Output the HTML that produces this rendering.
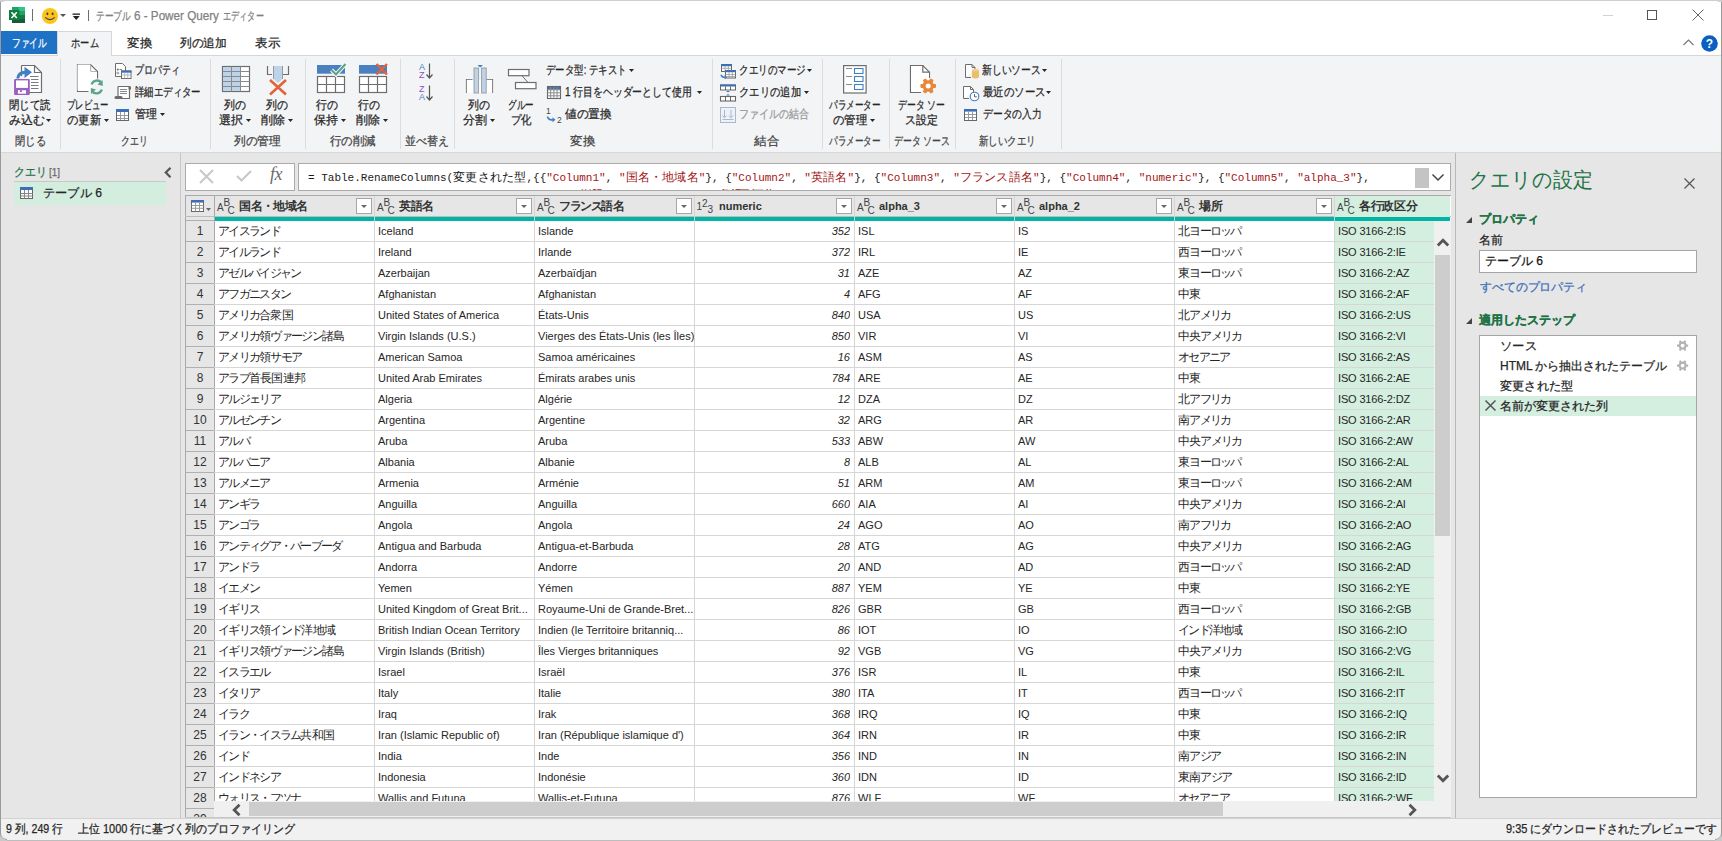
<!DOCTYPE html><html><head><meta charset="utf-8"><style>
*{margin:0;padding:0;box-sizing:border-box}
html,body{width:1722px;height:841px;overflow:hidden;background:#fff}
body{position:relative;font-family:"Liberation Sans",sans-serif;font-size:12px;color:#262626}
.t{position:absolute;white-space:nowrap;line-height:16px;height:16px;transform-origin:0 50%}
.g{color:#444}
.b{font-weight:bold}
.m{font-family:"Liberation Mono",monospace;font-size:11px}
svg{position:absolute;overflow:visible}
.c{position:absolute;white-space:nowrap;overflow:hidden;line-height:20px;height:20px;font-size:11px;color:#262626}
</style></head><body>
<div style="position:absolute;left:0px;top:0px;width:1722px;height:2px;background:#cfcfcf"></div>
<div style="position:absolute;left:0px;top:1px;width:1722px;height:30px;background:#fff;border-radius:6px 6px 0 0"></div>
<div style="position:absolute;left:0px;top:31px;width:1722px;height:25px;background:#fff"></div>
<div style="position:absolute;left:0px;top:55px;width:1722px;height:1px;background:#d6d6d6"></div>
<div style="position:absolute;left:0px;top:56px;width:1722px;height:96px;background:#f3f4f6"></div>
<div style="position:absolute;left:0px;top:152px;width:1722px;height:1px;background:#d8d8d8"></div>
<div style="position:absolute;left:0px;top:153px;width:1722px;height:665px;background:#e6e6e6"></div>
<div style="position:absolute;left:0px;top:818px;width:1722px;height:22px;background:#f1f1f1;border-top:1px solid #d2d2d2"></div>
<div style="position:absolute;left:0px;top:840px;width:1722px;height:1px;background:#bdbdbd"></div>
<div style="position:absolute;left:0px;top:2px;width:1px;height:838px;background:#9a9a9a"></div>
<div style="position:absolute;left:1721px;top:2px;width:1px;height:838px;background:#9a9a9a"></div>
<svg style="left:9px;top:7px" width="17" height="17" viewBox="0 0 17 17"><rect x="3" y="0" width="13" height="16" fill="#21a366"/>
<rect x="9.5" y="0" width="6.5" height="4" fill="#33c481"/>
<rect x="3" y="8" width="13" height="4" fill="#107c41"/>
<rect x="3" y="12" width="13" height="4" fill="#185c37"/>
<rect x="0" y="3" width="10.5" height="10" fill="#107c41"/>
<path d="M2.5 5.2 L7.8 11 M7.8 5.2 L2.5 11" stroke="#fff" stroke-width="1.6"/></svg>
<div style="position:absolute;left:32px;top:9px;width:1px;height:12px;background:#6e6e6e"></div>
<svg style="left:42px;top:8px" width="16" height="16" viewBox="0 0 16 16"><circle cx="8" cy="8" r="8" fill="#fcc419"/>
<ellipse cx="5.4" cy="5.8" rx="1" ry="1.4" fill="#3a3f5c"/>
<ellipse cx="10.6" cy="5.8" rx="1" ry="1.4" fill="#3a3f5c"/>
<path d="M3.2 9.3 Q8 13.8 12.8 9.3" stroke="#3a3f5c" stroke-width="1.1" fill="none"/></svg>
<svg style="left:60px;top:14px" width="6" height="4" viewBox="0 0 6 4"><path d="M0 0H6L3 3z" fill="#555"/></svg>
<svg style="left:72px;top:13px" width="9" height="8" viewBox="0 0 9 8"><rect x="0.5" y="0.5" width="7.5" height="1.3" fill="#222"/><path d="M0.8 3H7.7L4.25 7z" fill="#222"/></svg>
<div style="position:absolute;left:88px;top:10px;width:1px;height:11px;background:#6e6e6e"></div>
<div class="t " style="left:96px;top:8px;color:#808080;transform:scaleX(0.723);-webkit-text-stroke:0.25px currentColor;">テーブル</div>
<div class="t " style="left:134px;top:8px;color:#808080;font-size:13px;transform:scaleX(0.897);-webkit-text-stroke:0.25px currentColor;">6 - Power Query</div>
<div class="t " style="left:223px;top:8px;color:#808080;transform:scaleX(0.678);-webkit-text-stroke:0.25px currentColor;">エディター</div>
<div style="position:absolute;left:1603px;top:15px;width:10px;height:1px;background:#d0d0d0"></div>
<div style="position:absolute;left:1647px;top:10px;width:10px;height:10px;border:1px solid #555"></div>
<svg style="left:1692px;top:9px" width="12" height="12" viewBox="0 0 12 12"><path d="M0.5 0.5L11.5 11.5M11.5 0.5L0.5 11.5" stroke="#555" stroke-width="0.9"/></svg>
<div style="position:absolute;left:1px;top:31px;width:56px;height:23px;background:#1e72c6"></div>
<div class="t " style="left:12px;top:35px;color:#fff;transform:scaleX(0.723);-webkit-text-stroke:0.25px currentColor;">ファイル</div>
<div style="position:absolute;left:57px;top:31px;width:55px;height:25px;background:#f3f4f6;border:1px solid #d6d6d6;border-bottom:none"></div>
<div class="t " style="left:71px;top:35px;transform:scaleX(0.771);-webkit-text-stroke:0.25px currentColor;">ホーム</div>
<div class="t " style="left:127px;top:35px;transform:scaleX(1.043);-webkit-text-stroke:0.25px currentColor;">変換</div>
<div class="t " style="left:180px;top:35px;transform:scaleX(0.979);-webkit-text-stroke:0.25px currentColor;">列の追加</div>
<div class="t " style="left:255px;top:35px;transform:scaleX(1.043);-webkit-text-stroke:0.25px currentColor;">表示</div>
<svg style="left:1683px;top:39px" width="11" height="7" viewBox="0 0 11 7"><path d="M0.5 6L5.5 1L10.5 6" stroke="#777" stroke-width="1.2" fill="none"/></svg>
<svg style="left:1701px;top:35px" width="17" height="17" viewBox="0 0 17 17"><circle cx="8.5" cy="8.5" r="8.3" fill="#0a5fc0"/><text x="8.5" y="13" text-anchor="middle" font-family="Liberation Sans" font-weight="bold" font-size="12" fill="#fff">?</text></svg>
<div style="position:absolute;left:60px;top:59px;width:1px;height:90px;background:#dcdcdc"></div>
<div style="position:absolute;left:210px;top:59px;width:1px;height:90px;background:#dcdcdc"></div>
<div style="position:absolute;left:305px;top:59px;width:1px;height:90px;background:#dcdcdc"></div>
<div style="position:absolute;left:400px;top:59px;width:1px;height:90px;background:#dcdcdc"></div>
<div style="position:absolute;left:454px;top:59px;width:1px;height:90px;background:#dcdcdc"></div>
<div style="position:absolute;left:712px;top:59px;width:1px;height:90px;background:#dcdcdc"></div>
<div style="position:absolute;left:822px;top:59px;width:1px;height:90px;background:#dcdcdc"></div>
<div style="position:absolute;left:889px;top:59px;width:1px;height:90px;background:#dcdcdc"></div>
<div style="position:absolute;left:955px;top:59px;width:1px;height:90px;background:#dcdcdc"></div>
<div style="position:absolute;left:1061px;top:59px;width:1px;height:90px;background:#dcdcdc"></div>
<div class="t g" style="left:15px;top:133px;transform:scaleX(0.857);-webkit-text-stroke:0.25px currentColor;">閉じる</div>
<div class="t g" style="left:121px;top:133px;transform:scaleX(0.743);-webkit-text-stroke:0.25px currentColor;">クエリ</div>
<div class="t g" style="left:234px;top:133px;transform:scaleX(0.979);-webkit-text-stroke:0.25px currentColor;">列の管理</div>
<div class="t g" style="left:330px;top:133px;transform:scaleX(0.957);-webkit-text-stroke:0.25px currentColor;">行の削減</div>
<div class="t g" style="left:405px;top:133px;transform:scaleX(0.915);-webkit-text-stroke:0.25px currentColor;">並べ替え</div>
<div class="t g" style="left:570px;top:133px;transform:scaleX(1.043);-webkit-text-stroke:0.25px currentColor;">変換</div>
<div class="t g" style="left:754px;top:133px;transform:scaleX(1.043);-webkit-text-stroke:0.25px currentColor;">結合</div>
<div class="t g" style="left:829px;top:133px;transform:scaleX(0.718);-webkit-text-stroke:0.25px currentColor;">パラメーター</div>
<div class="t g" style="left:894px;top:133px;transform:scaleX(0.740);-webkit-text-stroke:0.25px currentColor;">データ ソース</div>
<div class="t g" style="left:979px;top:133px;transform:scaleX(0.789);-webkit-text-stroke:0.25px currentColor;">新しいクエリ</div>
<div class="t " style="left:9px;top:97px;transform:scaleX(0.872);-webkit-text-stroke:0.25px currentColor;">閉じて読</div>
<div class="t " style="left:9px;top:112px;transform:scaleX(1.000);-webkit-text-stroke:0.25px currentColor;">み込む</div>
<svg style="left:46px;top:119px" width="5" height="3" viewBox="0 0 5 3"><path d="M0 0H5L2.5 3z" fill="#262626"/></svg>
<div class="t " style="left:67px;top:97px;transform:scaleX(0.695);-webkit-text-stroke:0.25px currentColor;">プレビュー</div>
<div class="t " style="left:67px;top:112px;transform:scaleX(0.943);-webkit-text-stroke:0.25px currentColor;">の更新</div>
<svg style="left:104px;top:119px" width="5" height="3" viewBox="0 0 5 3"><path d="M0 0H5L2.5 3z" fill="#262626"/></svg>
<div class="t " style="left:224px;top:97px;transform:scaleX(0.913);-webkit-text-stroke:0.25px currentColor;">列の</div>
<div class="t " style="left:219px;top:112px;transform:scaleX(1.000);-webkit-text-stroke:0.25px currentColor;">選択</div>
<svg style="left:246px;top:119px" width="5" height="3" viewBox="0 0 5 3"><path d="M0 0H5L2.5 3z" fill="#262626"/></svg>
<div class="t " style="left:266px;top:97px;transform:scaleX(0.913);-webkit-text-stroke:0.25px currentColor;">列の</div>
<div class="t " style="left:261px;top:112px;transform:scaleX(1.000);-webkit-text-stroke:0.25px currentColor;">削除</div>
<svg style="left:288px;top:119px" width="5" height="3" viewBox="0 0 5 3"><path d="M0 0H5L2.5 3z" fill="#262626"/></svg>
<div class="t " style="left:316px;top:97px;transform:scaleX(0.913);-webkit-text-stroke:0.25px currentColor;">行の</div>
<div class="t " style="left:314px;top:112px;transform:scaleX(1.000);-webkit-text-stroke:0.25px currentColor;">保持</div>
<svg style="left:341px;top:119px" width="5" height="3" viewBox="0 0 5 3"><path d="M0 0H5L2.5 3z" fill="#262626"/></svg>
<div class="t " style="left:358px;top:97px;transform:scaleX(0.913);-webkit-text-stroke:0.25px currentColor;">行の</div>
<div class="t " style="left:356px;top:112px;transform:scaleX(1.000);-webkit-text-stroke:0.25px currentColor;">削除</div>
<svg style="left:383px;top:119px" width="5" height="3" viewBox="0 0 5 3"><path d="M0 0H5L2.5 3z" fill="#262626"/></svg>
<div class="t " style="left:468px;top:97px;transform:scaleX(0.913);-webkit-text-stroke:0.25px currentColor;">列の</div>
<div class="t " style="left:463px;top:112px;transform:scaleX(1.000);-webkit-text-stroke:0.25px currentColor;">分割</div>
<svg style="left:490px;top:119px" width="5" height="3" viewBox="0 0 5 3"><path d="M0 0H5L2.5 3z" fill="#262626"/></svg>
<div class="t " style="left:508px;top:97px;transform:scaleX(0.714);-webkit-text-stroke:0.25px currentColor;">グルー</div>
<div class="t " style="left:511px;top:112px;transform:scaleX(0.870);-webkit-text-stroke:0.25px currentColor;">プ化</div>
<div class="t " style="left:829px;top:97px;transform:scaleX(0.718);-webkit-text-stroke:0.25px currentColor;">パラメーター</div>
<div class="t " style="left:833px;top:112px;transform:scaleX(0.943);-webkit-text-stroke:0.25px currentColor;">の管理</div>
<svg style="left:870px;top:119px" width="5" height="3" viewBox="0 0 5 3"><path d="M0 0H5L2.5 3z" fill="#262626"/></svg>
<div class="t " style="left:898px;top:97px;transform:scaleX(0.738);-webkit-text-stroke:0.25px currentColor;">データ ソー</div>
<div class="t " style="left:905px;top:112px;transform:scaleX(0.914);-webkit-text-stroke:0.25px currentColor;">ス設定</div>
<div class="t " style="left:135px;top:62px;transform:scaleX(0.746);-webkit-text-stroke:0.25px currentColor;">プロパティ</div>
<div class="t " style="left:135px;top:84px;transform:scaleX(0.783);-webkit-text-stroke:0.25px currentColor;">詳細エディター</div>
<div class="t " style="left:135px;top:106px;transform:scaleX(0.913);-webkit-text-stroke:0.25px currentColor;">管理</div>
<svg style="left:160px;top:113px" width="5" height="3" viewBox="0 0 5 3"><path d="M0 0H5L2.5 3z" fill="#262626"/></svg>
<div class="t " style="left:546px;top:62px;transform:scaleX(0.787);-webkit-text-stroke:0.25px currentColor;">データ型: テキスト</div>
<svg style="left:629px;top:69px" width="5" height="3" viewBox="0 0 5 3"><path d="M0 0H5L2.5 3z" fill="#262626"/></svg>
<div class="t " style="left:565px;top:84px;transform:scaleX(0.823);-webkit-text-stroke:0.25px currentColor;">1 行目をヘッダーとして使用</div>
<svg style="left:697px;top:91px" width="5" height="3" viewBox="0 0 5 3"><path d="M0 0H5L2.5 3z" fill="#262626"/></svg>
<div class="t " style="left:565px;top:106px;transform:scaleX(0.979);-webkit-text-stroke:0.25px currentColor;">値の置換</div>
<div class="t " style="left:739px;top:62px;transform:scaleX(0.795);-webkit-text-stroke:0.25px currentColor;">クエリのマージ</div>
<svg style="left:807px;top:69px" width="5" height="3" viewBox="0 0 5 3"><path d="M0 0H5L2.5 3z" fill="#262626"/></svg>
<div class="t " style="left:739px;top:84px;transform:scaleX(0.859);-webkit-text-stroke:0.25px currentColor;">クエリの追加</div>
<svg style="left:804px;top:91px" width="5" height="3" viewBox="0 0 5 3"><path d="M0 0H5L2.5 3z" fill="#262626"/></svg>
<div class="t " style="left:739px;top:106px;color:#9a9a9a;transform:scaleX(0.831);-webkit-text-stroke:0.25px currentColor;">ファイルの結合</div>
<div class="t " style="left:982px;top:62px;transform:scaleX(0.817);-webkit-text-stroke:0.25px currentColor;">新しいソース</div>
<svg style="left:1042px;top:69px" width="5" height="3" viewBox="0 0 5 3"><path d="M0 0H5L2.5 3z" fill="#262626"/></svg>
<div class="t " style="left:983px;top:84px;transform:scaleX(0.873);-webkit-text-stroke:0.25px currentColor;">最近のソース</div>
<svg style="left:1046px;top:91px" width="5" height="3" viewBox="0 0 5 3"><path d="M0 0H5L2.5 3z" fill="#262626"/></svg>
<div class="t " style="left:983px;top:106px;transform:scaleX(0.817);-webkit-text-stroke:0.25px currentColor;">データの入力</div>
<svg style="left:13px;top:64px" width="30" height="32" viewBox="0 0 30 32"><path d="M8.5 1.5H21.5L28.5 8.5V28.5H16" fill="#fff" stroke="#6d6d6d" stroke-width="1.2"/>
<path d="M21.5 1.5V8.5H28.5" fill="none" stroke="#6d6d6d" stroke-width="1.2"/>
<path d="M8.5 1.5V12" stroke="#6d6d6d" stroke-width="1.2"/>
<path d="M17 12.5H25.5M18 15.5H25.5M18 18.5H25.5M18 21.5H25.5M18 24.5H25.5" stroke="#6d6d6d" stroke-width="0.9"/>
<path d="M4.8 14.5 Q5.2 8.5 12.5 8.2" stroke="#3f7fc2" stroke-width="3" fill="none"/>
<path d="M11.5 2.8L19 8.2L11.5 14z" fill="#3f7fc2"/>
<rect x="1.1" y="14.9" width="15.7" height="16" rx="1" fill="#9b5fc0"/>
<rect x="3" y="16.4" width="12" height="7.5" fill="#fff"/>
<rect x="4.9" y="26.2" width="8.1" height="3.5" fill="#fff"/>
<rect x="6.9" y="26.2" width="2" height="1.8" fill="#9b5fc0"/></svg>
<svg style="left:76px;top:63px" width="24" height="34" viewBox="0 0 24 34"><path d="M12.5 28.5H1.5V1.5H14.5L21.5 8.5V15.5" fill="#fff" stroke="#6d6d6d" stroke-width="1.2"/>
<path d="M14.5 1.5V8.5H21.5" fill="none" stroke="#6d6d6d" stroke-width="1.2"/>
<rect x="1.5" y="1.5" width="13" height="26" fill="#fff"/><path d="M2.1 8.5H20.9V15H12V27.9H2.1z" fill="#fff"/>
<path d="M15.6 21.5 A5.5 5.5 0 0 1 25.5 20" stroke="#5aa58a" stroke-width="2.4" fill="none"/>
<path d="M26.5 17L26.8 23L21.5 21.5z" fill="#5aa58a"/>
<path d="M25.8 26.5 A5.5 5.5 0 0 1 16 28" stroke="#5aa58a" stroke-width="2.4" fill="none"/>
<path d="M15 31L14.8 25L20 26.6z" fill="#5aa58a"/></svg>
<svg style="left:114px;top:62px" width="18" height="18" viewBox="0 0 18 18"><path d="M1.5 1.5H8.5L11.5 4.5V14.5H1.5z" fill="#fff" stroke="#6d6d6d" stroke-width="1"/>
<circle cx="3.8" cy="7.5" r="1" fill="#6d6d6d"/><circle cx="3.8" cy="11" r="1" fill="none" stroke="#6d6d6d" stroke-width="0.7"/>
<path d="M5.5 7.5H8" stroke="#6d6d6d" stroke-width="0.8"/>
<rect x="7.5" y="9" width="9.5" height="7.5" fill="#fff" stroke="#6d6d6d" stroke-width="1"/>
<rect x="7" y="8.5" width="10.5" height="2.2" fill="#3c6fb4"/>
<path d="M7.5 13H17M10.6 10.5V16.5M13.8 10.5V16.5" stroke="#aaa" stroke-width="0.8"/></svg>
<svg style="left:114px;top:85px" width="18" height="16" viewBox="0 0 18 16"><path d="M4 1.5H15.5V13.5H3.5" fill="#fff" stroke="#6d6d6d" stroke-width="1.2"/>
<path d="M4 1.5V11" stroke="#6d6d6d" stroke-width="1.2"/>
<rect x="14.5" y="1.5" width="2.5" height="3" fill="#6d6d6d"/>
<rect x="0.5" y="11" width="8" height="3" rx="1.5" fill="#6d6d6d"/>
<path d="M6 4.5H13M6 6.5H13M6 8.5H13" stroke="#8a8a8a" stroke-width="1"/></svg>
<svg style="left:116px;top:109px" width="13" height="12" viewBox="0 0 13 12"><rect x="0.5" y="0.5" width="12" height="11" fill="#fff" stroke="#666" stroke-width="1"/><rect x="0" y="0" width="13" height="3" fill="#3c6fb4"/><path d="M4.5 3V11M8.5 3V11M1 6.5H12M1 9.5H12" stroke="#9a9a9a" stroke-width="1"/></svg>
<svg style="left:222px;top:66px" width="28" height="26" viewBox="0 0 28 26"><rect x="0.5" y="0.5" width="27" height="25" fill="#fff" stroke="#6d6d6d" stroke-width="1.2"/>
<rect x="1" y="1" width="17.5" height="24" fill="#bcd3ea"/>
<path d="M9.5 0.5V25.5M18.5 0.5V25.5M0.5 5.5H27.5M0.5 10.5H27.5M0.5 15.5H27.5M0.5 20.5H27.5" stroke="#8a8a8a" stroke-width="1"/></svg>
<svg style="left:266px;top:65px" width="24" height="31" viewBox="0 0 24 31"><path d="M1.5 1V9.5H6M17 9.5H22.5V1" stroke="#6d6d6d" stroke-width="1.2" fill="none"/>
<path d="M7.5 1H16.5V14L12 18L7.5 14z" fill="#bcd3ea"/>
<path d="M7.5 1V14M16.5 1V14" stroke="#9a9a9a" stroke-width="1"/>
<path d="M4 15L20 29.5M20 15L4 29.5" stroke="#e0633a" stroke-width="2.6"/></svg>
<svg style="left:316px;top:62px" width="31" height="32" viewBox="0 0 31 32"><rect x="1" y="3" width="28" height="8.7" fill="#4a80bf"/>
<rect x="1.5" y="14.5" width="27" height="16" fill="#fff" stroke="#6d6d6d" stroke-width="1.2"/>
<path d="M10.5 14.5V30.5M19.5 14.5V30.5M1.5 22.5H28.5" stroke="#6d6d6d" stroke-width="1.2"/>
<path d="M15.5 8L20 12.5L29.5 2" stroke="#fff" stroke-width="4" fill="none"/>
<path d="M15.5 8L20 12.5L29.5 2" stroke="#5aa58a" stroke-width="2.2" fill="none"/></svg>
<svg style="left:358px;top:62px" width="31" height="32" viewBox="0 0 31 32"><rect x="1" y="3" width="28" height="8.7" fill="#4a80bf"/>
<rect x="1.5" y="14.5" width="27" height="16" fill="#fff" stroke="#6d6d6d" stroke-width="1.2"/>
<path d="M10.5 14.5V30.5M19.5 14.5V30.5M1.5 22.5H28.5" stroke="#6d6d6d" stroke-width="1.2"/>
<path d="M18.5 2L29 12.5M29 2L18.5 12.5" stroke="#e0633a" stroke-width="2.4"/></svg>
<svg style="left:419px;top:63px" width="16" height="17" viewBox="0 0 16 17"><text x="0" y="7" font-family="Liberation Sans" font-size="9" fill="#3f7fc2">A</text>
<text x="0" y="15" font-family="Liberation Sans" font-size="9" fill="#8e4fbf">Z</text>
<path d="M10.5 0.5V14.5M7.5 11.5L10.5 15L13.5 11.5" stroke="#555" stroke-width="1.2" fill="none"/></svg>
<svg style="left:419px;top:85px" width="16" height="17" viewBox="0 0 16 17"><text x="0" y="7" font-family="Liberation Sans" font-size="9" fill="#8e4fbf">Z</text>
<text x="0" y="15" font-family="Liberation Sans" font-size="9" fill="#3f7fc2">A</text>
<path d="M10.5 0.5V14.5M7.5 11.5L10.5 15L13.5 11.5" stroke="#555" stroke-width="1.2" fill="none"/></svg>
<svg style="left:465px;top:64px" width="30" height="30" viewBox="0 0 30 30"><path d="M1.5 29V15.5H7.5M20.5 15.5H27.5V29" stroke="#6d6d6d" stroke-width="1.2" fill="none"/>
<rect x="1.8" y="15.8" width="25.4" height="13" fill="#fff"/>
<rect x="9" y="4" width="4.6" height="25" fill="#bcd3ea" stroke="#9a9a9a" stroke-width="0.9"/>
<rect x="16.6" y="4" width="4.6" height="25" fill="#bcd3ea" stroke="#9a9a9a" stroke-width="0.9"/>
<path d="M12.5 1H18L15.2 3.6z" fill="#3f7fc2"/></svg>
<svg style="left:507px;top:68px" width="30" height="22" viewBox="0 0 30 22"><rect x="1.5" y="1.5" width="20.5" height="6.2" fill="#fff" stroke="#6d6d6d" stroke-width="1.2"/>
<rect x="8.5" y="14.5" width="20.5" height="6.2" fill="#fff" stroke="#6d6d6d" stroke-width="1.2"/>
<path d="M15 7.7L21 14.5" stroke="#6d6d6d" stroke-width="1"/></svg>
<svg style="left:547px;top:86px" width="14" height="13" viewBox="0 0 14 13"><rect x="0.5" y="0.5" width="13" height="12" fill="#fff" stroke="#666" stroke-width="1.1"/>
<rect x="1" y="1" width="12" height="2.6" fill="#3c6fb4"/>
<path d="M3.7 1V12.5M6.9 1V12.5M10.1 1V12.5M0.5 3.8H13.5M0.5 6.8H13.5M0.5 9.8H13.5" stroke="#8a8a8a" stroke-width="1"/></svg>
<svg style="left:545px;top:106px" width="18" height="18" viewBox="0 0 18 18"><text x="1" y="8" font-family="Liberation Sans" font-size="8.5" fill="#444">1</text>
<text x="12" y="17" font-family="Liberation Sans" font-size="8.5" fill="#444">2</text>
<path d="M2.5 10.5 Q3.5 14.5 8 13.8" stroke="#3f7fc2" stroke-width="1.6" fill="none"/>
<path d="M7.5 11.2L10.5 13.8L7.5 16.2z" fill="#3f7fc2"/></svg>
<svg style="left:720px;top:63px" width="16" height="16" viewBox="0 0 16 16"><rect x="1.5" y="1.5" width="10" height="7" fill="#fff" stroke="#666" stroke-width="1"/>
<rect x="1" y="1" width="11" height="2.2" fill="#3c6fb4"/>
<path d="M1.5 5.3H11.5M5 3V8.5M8.3 3V8.5" stroke="#999" stroke-width="0.8"/>
<rect x="5.5" y="7.5" width="10" height="7.5" fill="#fff" stroke="#666" stroke-width="1"/>
<rect x="5" y="7" width="11" height="2.2" fill="#3c6fb4"/>
<path d="M5.5 11.5H15.5M5.5 13.5H15.5M9 9V15M12.3 9V15" stroke="#999" stroke-width="0.8"/>
<path d="M1 11.8 Q1.8 14.6 5 14.3" stroke="#3f7fc2" stroke-width="1.5" fill="none"/>
<path d="M4.6 12L7 14.3L4.6 16.4z" fill="#3f7fc2"/></svg>
<svg style="left:720px;top:84px" width="16" height="18" viewBox="0 0 16 18"><rect x="0.5" y="1" width="15" height="5" fill="#fff" stroke="#666" stroke-width="1"/>
<rect x="0" y="0.5" width="16" height="2" fill="#3c6fb4"/>
<path d="M5.5 2.5V6M10.5 2.5V6" stroke="#666" stroke-width="1"/>
<rect x="0.5" y="12.5" width="15" height="4.5" fill="#fff" stroke="#666" stroke-width="1.1"/>
<path d="M5.5 12.5V17M10.5 12.5V17" stroke="#666" stroke-width="1"/>
<path d="M6 7L8 8.6L10 7z M6 11.5L8 9.9L10 11.5z" fill="#3f7fc2"/></svg>
<svg style="left:720px;top:107px" width="16" height="16" viewBox="0 0 16 16"><rect x="0.5" y="0.5" width="15" height="15" fill="#eef2f8" stroke="#a9b8cc" stroke-width="1"/>
<path d="M4.5 3V10.5M2.5 8.5L4.5 10.8L6.5 8.5M11 3V10.5M9 8.5L11 10.8L13 8.5M2.5 12.5H13.5" stroke="#a9b8cc" stroke-width="1" fill="none"/></svg>
<svg style="left:843px;top:65px" width="24" height="28" viewBox="0 0 24 28"><rect x="0.6" y="0.6" width="22.5" height="27.4" fill="#fff" stroke="#6d6d6d" stroke-width="1.2"/>
<path d="M3 3.5H9M3 11.5H9M3 19.5H9" stroke="#8a8a8a" stroke-width="1"/>
<rect x="11.5" y="3.5" width="8.5" height="5" fill="none" stroke="#3f7fc2" stroke-width="1.1"/>
<rect x="11.5" y="11.5" width="8.5" height="5" fill="none" stroke="#3f7fc2" stroke-width="1.1"/>
<rect x="11.5" y="19.5" width="8.5" height="5" fill="none" stroke="#3f7fc2" stroke-width="1.1"/></svg>
<svg style="left:909px;top:64px" width="30" height="32" viewBox="0 0 30 32"><path d="M12 28.5H1.5V1.5H13.8L20.5 8.2V14" fill="#fff" stroke="#6d6d6d" stroke-width="1.2"/>
<path d="M2.1 2.1H13.5V8.5H19.9V14H12V27.9H2.1z" fill="#fff"/>
<path d="M13.8 1.5V8.2H20.5" fill="none" stroke="#6d6d6d" stroke-width="1.2"/>
<g transform="translate(19.2 22)" fill="#e8873a">
<circle r="5.8"/>
<rect x="-7.8" y="-1.9" width="15.6" height="3.8" rx="0.8"/>
<rect x="-7.8" y="-1.9" width="15.6" height="3.8" rx="0.8" transform="rotate(60)"/>
<rect x="-7.8" y="-1.9" width="15.6" height="3.8" rx="0.8" transform="rotate(-60)"/>
<circle r="2.5" fill="#fff"/></g></svg>
<svg style="left:964px;top:63px" width="16" height="17" viewBox="0 0 16 17"><path d="M1.5 14.5V1.5H8L11 4.5V6" fill="#fff" stroke="#6d6d6d" stroke-width="1"/>
<path d="M1.5 14.5H7" stroke="#6d6d6d" stroke-width="1"/>
<path d="M8 1.5V4.5H11" fill="none" stroke="#6d6d6d" stroke-width="1"/>
<path d="M8 7V14.5Q11.5 16.5 15 14.5V7z" fill="#e8c06b"/>
<ellipse cx="11.5" cy="7" rx="3.5" ry="1.3" fill="#f0d28e"/></svg>
<svg style="left:962px;top:85px" width="18" height="18" viewBox="0 0 18 18"><path d="M1.5 13.5V1.5H8.5L11.5 4.5V7" fill="#fff" stroke="#6d6d6d" stroke-width="1"/>
<path d="M1.5 13.5H7" stroke="#6d6d6d" stroke-width="1"/>
<path d="M8.5 1.5V4.5H11.5" fill="none" stroke="#6d6d6d" stroke-width="1"/>
<circle cx="12.5" cy="11.5" r="4.3" fill="#fff" stroke="#3f7fc2" stroke-width="1.1"/>
<path d="M12.5 9V11.8H14.8" stroke="#555" stroke-width="0.9" fill="none"/></svg>
<svg style="left:964px;top:109px" width="13" height="12" viewBox="0 0 13 12"><rect x="0.5" y="0.5" width="12" height="11" fill="#fff" stroke="#666" stroke-width="1"/><rect x="0" y="0" width="13" height="2.6" fill="#3c6fb4"/><path d="M4.5 2.6V11M8.5 2.6V11M1 5.5H12M1 8.5H12" stroke="#9a9a9a" stroke-width="1"/></svg>
<div class="t " style="left:14px;top:164px;color:#217346;transform:scaleX(0.914);-webkit-text-stroke:0.25px currentColor;">クエリ</div>
<div class="t " style="left:49px;top:165px;color:#6a6a6a;font-size:10px;transform:scaleX(0.988);-webkit-text-stroke:0.25px currentColor;">[1]</div>
<svg style="left:164px;top:167px" width="8" height="11" viewBox="0 0 8 11"><path d="M6.5 0.8L1.8 5.5L6.5 10.2" stroke="#555" stroke-width="2.2" fill="none"/></svg>
<div style="position:absolute;left:14px;top:181px;width:152px;height:1px;background:#c8c8c8"></div>
<div style="position:absolute;left:14px;top:182px;width:152px;height:23px;background:#d3eedf"></div>
<svg style="left:20px;top:187px" width="13" height="12" viewBox="0 0 13 12"><rect x="0.5" y="0.5" width="12" height="11" fill="#fff" stroke="#666"/><rect x="0" y="0" width="13" height="3" fill="#3c6fb4"/><path d="M0.5 6.5H12.5M0.5 9H12.5M4.5 3V11.5M8.5 3V11.5" stroke="#888" stroke-width="1"/></svg>
<div class="t " style="left:43px;top:185px;transform:scaleX(1.017);-webkit-text-stroke:0.25px currentColor;">テーブル 6</div>
<div style="position:absolute;left:180px;top:153px;width:1px;height:665px;background:#c6c6c6"></div>
<div style="position:absolute;left:185px;top:163px;width:110px;height:28px;background:#fff;border:1px solid #ababab"></div>
<div style="position:absolute;left:298px;top:163px;width:1153px;height:28px;background:#fff;border:1px solid #ababab"></div>
<div style="position:absolute;left:185px;top:195px;width:1266px;height:623px;background:#fff"></div>
<div style="position:absolute;left:185px;top:195px;width:1266px;height:1px;background:#a9a9a9"></div>
<div style="position:absolute;left:185px;top:195px;width:1px;height:623px;background:#a9a9a9"></div>
<div style="position:absolute;left:186px;top:196px;width:1264px;height:20px;background:#e6e6e6"></div>
<div style="position:absolute;left:186px;top:216px;width:28px;height:602px;background:#e6e6e6"></div>
<div style="position:absolute;left:185px;top:216px;width:1266px;height:1px;background:#bdbdbd"></div>
<div style="position:absolute;left:214px;top:217px;width:1220px;height:4px;background:#00b4a6"></div>
<div style="position:absolute;left:1334px;top:196px;width:116px;height:21px;background:#d4eedf"></div>
<div style="position:absolute;left:1434px;top:217px;width:16px;height:4px;background:#00b4a6"></div>
<div style="position:absolute;left:186px;top:220px;width:28px;height:1px;background:#b0b0b0"></div>
<div style="position:absolute;left:214px;top:196px;width:1px;height:622px;background:#a9a9a9"></div>
<div style="position:absolute;left:1335px;top:221px;width:99px;height:580px;background:#d4eedf"></div>
<div style="position:absolute;left:374px;top:196px;width:1px;height:605px;background:#d6d6d6"></div>
<div style="position:absolute;left:534px;top:196px;width:1px;height:605px;background:#d6d6d6"></div>
<div style="position:absolute;left:694px;top:196px;width:1px;height:605px;background:#d6d6d6"></div>
<div style="position:absolute;left:854px;top:196px;width:1px;height:605px;background:#d6d6d6"></div>
<div style="position:absolute;left:1014px;top:196px;width:1px;height:605px;background:#d6d6d6"></div>
<div style="position:absolute;left:1174px;top:196px;width:1px;height:605px;background:#d6d6d6"></div>
<div style="position:absolute;left:1334px;top:196px;width:1px;height:605px;background:#d6d6d6"></div>
<svg style="left:191px;top:200px" width="20" height="12" viewBox="0 0 20 12"><rect x="0.5" y="0.5" width="12" height="11" fill="#fff" stroke="#666"/><rect x="0" y="0" width="13" height="2.6" fill="#3c6fb4"/><path d="M0.5 5.5H12.5M0.5 8.3H12.5M4.5 2.6V11.5M8.5 2.6V11.5" stroke="#999" stroke-width="1"/><path d="M15 8H20L17.5 11z" fill="#666"/></svg>
<svg style="left:217px;top:198px" width="20" height="16" viewBox="0 0 20 16"><text x="0" y="13" font-family="Liberation Sans" font-size="10" fill="#444">A</text><text x="6.5" y="8" font-family="Liberation Sans" font-size="10" fill="#444">B</text><text x="10.5" y="15.5" font-family="Liberation Sans" font-size="10" fill="#444">C</text></svg>
<div class="t b" style="left:239px;top:198px;font-size:11px;color:#333"><span style="font-size:12px;letter-spacing:-0.3px">国名</span><span style="font-size:12px;letter-spacing:-1.5px">・</span><span style="font-size:12px;letter-spacing:-0.3px">地域名</span></div>
<div style="position:absolute;left:356px;top:198px;width:16px;height:16px;background:#fff;border:1px solid #a6a6a6"></div>
<svg style="left:361px;top:205px" width="6" height="3" viewBox="0 0 6 3"><path d="M0 0H6L3 3z" fill="#666"/></svg>
<svg style="left:377px;top:198px" width="20" height="16" viewBox="0 0 20 16"><text x="0" y="13" font-family="Liberation Sans" font-size="10" fill="#444">A</text><text x="6.5" y="8" font-family="Liberation Sans" font-size="10" fill="#444">B</text><text x="10.5" y="15.5" font-family="Liberation Sans" font-size="10" fill="#444">C</text></svg>
<div class="t b" style="left:399px;top:198px;font-size:11px;color:#333"><span style="font-size:12px;letter-spacing:-0.3px">英語名</span></div>
<div style="position:absolute;left:516px;top:198px;width:16px;height:16px;background:#fff;border:1px solid #a6a6a6"></div>
<svg style="left:521px;top:205px" width="6" height="3" viewBox="0 0 6 3"><path d="M0 0H6L3 3z" fill="#666"/></svg>
<svg style="left:537px;top:198px" width="20" height="16" viewBox="0 0 20 16"><text x="0" y="13" font-family="Liberation Sans" font-size="10" fill="#444">A</text><text x="6.5" y="8" font-family="Liberation Sans" font-size="10" fill="#444">B</text><text x="10.5" y="15.5" font-family="Liberation Sans" font-size="10" fill="#444">C</text></svg>
<div class="t b" style="left:559px;top:198px;font-size:11px;color:#333"><span style="font-size:12px;letter-spacing:-1.5px">フランス</span><span style="font-size:12px;letter-spacing:-0.3px">語名</span></div>
<div style="position:absolute;left:676px;top:198px;width:16px;height:16px;background:#fff;border:1px solid #a6a6a6"></div>
<svg style="left:681px;top:205px" width="6" height="3" viewBox="0 0 6 3"><path d="M0 0H6L3 3z" fill="#666"/></svg>
<svg style="left:697px;top:198px" width="20" height="16" viewBox="0 0 20 16"><text x="-0.5" y="12" font-family="Liberation Sans" font-size="10" fill="#444">1</text><text x="5" y="9" font-family="Liberation Sans" font-size="10" fill="#444">2</text><text x="10.5" y="15" font-family="Liberation Sans" font-size="10" fill="#444">3</text></svg>
<div class="t b" style="left:719px;top:198px;font-size:11px;color:#333">numeric</div>
<div style="position:absolute;left:836px;top:198px;width:16px;height:16px;background:#fff;border:1px solid #a6a6a6"></div>
<svg style="left:841px;top:205px" width="6" height="3" viewBox="0 0 6 3"><path d="M0 0H6L3 3z" fill="#666"/></svg>
<svg style="left:857px;top:198px" width="20" height="16" viewBox="0 0 20 16"><text x="0" y="13" font-family="Liberation Sans" font-size="10" fill="#444">A</text><text x="6.5" y="8" font-family="Liberation Sans" font-size="10" fill="#444">B</text><text x="10.5" y="15.5" font-family="Liberation Sans" font-size="10" fill="#444">C</text></svg>
<div class="t b" style="left:879px;top:198px;font-size:11px;color:#333">alpha_3</div>
<div style="position:absolute;left:996px;top:198px;width:16px;height:16px;background:#fff;border:1px solid #a6a6a6"></div>
<svg style="left:1001px;top:205px" width="6" height="3" viewBox="0 0 6 3"><path d="M0 0H6L3 3z" fill="#666"/></svg>
<svg style="left:1017px;top:198px" width="20" height="16" viewBox="0 0 20 16"><text x="0" y="13" font-family="Liberation Sans" font-size="10" fill="#444">A</text><text x="6.5" y="8" font-family="Liberation Sans" font-size="10" fill="#444">B</text><text x="10.5" y="15.5" font-family="Liberation Sans" font-size="10" fill="#444">C</text></svg>
<div class="t b" style="left:1039px;top:198px;font-size:11px;color:#333">alpha_2</div>
<div style="position:absolute;left:1156px;top:198px;width:16px;height:16px;background:#fff;border:1px solid #a6a6a6"></div>
<svg style="left:1161px;top:205px" width="6" height="3" viewBox="0 0 6 3"><path d="M0 0H6L3 3z" fill="#666"/></svg>
<svg style="left:1177px;top:198px" width="20" height="16" viewBox="0 0 20 16"><text x="0" y="13" font-family="Liberation Sans" font-size="10" fill="#444">A</text><text x="6.5" y="8" font-family="Liberation Sans" font-size="10" fill="#444">B</text><text x="10.5" y="15.5" font-family="Liberation Sans" font-size="10" fill="#444">C</text></svg>
<div class="t b" style="left:1199px;top:198px;font-size:11px;color:#333"><span style="font-size:12px;letter-spacing:-0.3px">場所</span></div>
<div style="position:absolute;left:1316px;top:198px;width:16px;height:16px;background:#fff;border:1px solid #a6a6a6"></div>
<svg style="left:1321px;top:205px" width="6" height="3" viewBox="0 0 6 3"><path d="M0 0H6L3 3z" fill="#666"/></svg>
<svg style="left:1337px;top:198px" width="20" height="16" viewBox="0 0 20 16"><text x="0" y="13" font-family="Liberation Sans" font-size="10" fill="#444">A</text><text x="6.5" y="8" font-family="Liberation Sans" font-size="10" fill="#444">B</text><text x="10.5" y="15.5" font-family="Liberation Sans" font-size="10" fill="#444">C</text></svg>
<div class="t b" style="left:1359px;top:198px;font-size:11px;color:#333"><span style="font-size:12px;letter-spacing:-0.3px">各行政区分</span></div>
<div style="position:absolute;left:214px;top:241px;width:1220px;height:1px;background:#d6d6d6"></div>
<div style="position:absolute;left:186px;top:241px;width:28px;height:1px;background:#b0b0b0"></div>
<div class="c" style="left:186px;top:221px;width:28px;text-align:center;color:#333;font-size:12px">1</div>
<div class="c" style="left:218px;top:221px;width:156px;height:20px;"><span style="font-size:12px;letter-spacing:-1.7px">アイスランド</span></div>
<div class="c" style="left:378px;top:221px;width:156px;height:20px;">Iceland</div>
<div class="c" style="left:538px;top:221px;width:156px;height:20px;">Islande</div>
<div class="c" style="left:695px;top:221px;width:155px;text-align:right;font-style:italic;height:20px">352</div>
<div class="c" style="left:858px;top:221px;width:156px;height:20px;">ISL</div>
<div class="c" style="left:1018px;top:221px;width:156px;height:20px;">IS</div>
<div class="c" style="left:1178px;top:221px;width:156px;height:20px;"><span style="font-size:12px;letter-spacing:-0.8px">北</span><span style="font-size:12px;letter-spacing:-1.7px">ヨーロッパ</span></div>
<div class="c" style="left:1338px;top:221px;width:156px;height:20px;letter-spacing:-0.15px;">ISO 3166-2:IS</div>
<div style="position:absolute;left:214px;top:262px;width:1220px;height:1px;background:#d6d6d6"></div>
<div style="position:absolute;left:186px;top:262px;width:28px;height:1px;background:#b0b0b0"></div>
<div class="c" style="left:186px;top:242px;width:28px;text-align:center;color:#333;font-size:12px">2</div>
<div class="c" style="left:218px;top:242px;width:156px;height:20px;"><span style="font-size:12px;letter-spacing:-1.7px">アイルランド</span></div>
<div class="c" style="left:378px;top:242px;width:156px;height:20px;">Ireland</div>
<div class="c" style="left:538px;top:242px;width:156px;height:20px;">Irlande</div>
<div class="c" style="left:695px;top:242px;width:155px;text-align:right;font-style:italic;height:20px">372</div>
<div class="c" style="left:858px;top:242px;width:156px;height:20px;">IRL</div>
<div class="c" style="left:1018px;top:242px;width:156px;height:20px;">IE</div>
<div class="c" style="left:1178px;top:242px;width:156px;height:20px;"><span style="font-size:12px;letter-spacing:-0.8px">西</span><span style="font-size:12px;letter-spacing:-1.7px">ヨーロッパ</span></div>
<div class="c" style="left:1338px;top:242px;width:156px;height:20px;letter-spacing:-0.15px;">ISO 3166-2:IE</div>
<div style="position:absolute;left:214px;top:283px;width:1220px;height:1px;background:#d6d6d6"></div>
<div style="position:absolute;left:186px;top:283px;width:28px;height:1px;background:#b0b0b0"></div>
<div class="c" style="left:186px;top:263px;width:28px;text-align:center;color:#333;font-size:12px">3</div>
<div class="c" style="left:218px;top:263px;width:156px;height:20px;"><span style="font-size:12px;letter-spacing:-1.7px">アゼルバイジャン</span></div>
<div class="c" style="left:378px;top:263px;width:156px;height:20px;">Azerbaijan</div>
<div class="c" style="left:538px;top:263px;width:156px;height:20px;">Azerbaïdjan</div>
<div class="c" style="left:695px;top:263px;width:155px;text-align:right;font-style:italic;height:20px">31</div>
<div class="c" style="left:858px;top:263px;width:156px;height:20px;">AZE</div>
<div class="c" style="left:1018px;top:263px;width:156px;height:20px;">AZ</div>
<div class="c" style="left:1178px;top:263px;width:156px;height:20px;"><span style="font-size:12px;letter-spacing:-0.8px">東</span><span style="font-size:12px;letter-spacing:-1.7px">ヨーロッパ</span></div>
<div class="c" style="left:1338px;top:263px;width:156px;height:20px;letter-spacing:-0.15px;">ISO 3166-2:AZ</div>
<div style="position:absolute;left:214px;top:304px;width:1220px;height:1px;background:#d6d6d6"></div>
<div style="position:absolute;left:186px;top:304px;width:28px;height:1px;background:#b0b0b0"></div>
<div class="c" style="left:186px;top:284px;width:28px;text-align:center;color:#333;font-size:12px">4</div>
<div class="c" style="left:218px;top:284px;width:156px;height:20px;"><span style="font-size:12px;letter-spacing:-1.7px">アフガニスタン</span></div>
<div class="c" style="left:378px;top:284px;width:156px;height:20px;">Afghanistan</div>
<div class="c" style="left:538px;top:284px;width:156px;height:20px;">Afghanistan</div>
<div class="c" style="left:695px;top:284px;width:155px;text-align:right;font-style:italic;height:20px">4</div>
<div class="c" style="left:858px;top:284px;width:156px;height:20px;">AFG</div>
<div class="c" style="left:1018px;top:284px;width:156px;height:20px;">AF</div>
<div class="c" style="left:1178px;top:284px;width:156px;height:20px;"><span style="font-size:12px;letter-spacing:-0.8px">中東</span></div>
<div class="c" style="left:1338px;top:284px;width:156px;height:20px;letter-spacing:-0.15px;">ISO 3166-2:AF</div>
<div style="position:absolute;left:214px;top:325px;width:1220px;height:1px;background:#d6d6d6"></div>
<div style="position:absolute;left:186px;top:325px;width:28px;height:1px;background:#b0b0b0"></div>
<div class="c" style="left:186px;top:305px;width:28px;text-align:center;color:#333;font-size:12px">5</div>
<div class="c" style="left:218px;top:305px;width:156px;height:20px;"><span style="font-size:12px;letter-spacing:-1.7px">アメリカ</span><span style="font-size:12px;letter-spacing:-0.8px">合衆国</span></div>
<div class="c" style="left:378px;top:305px;width:156px;height:20px;">United States of America</div>
<div class="c" style="left:538px;top:305px;width:156px;height:20px;">États-Unis</div>
<div class="c" style="left:695px;top:305px;width:155px;text-align:right;font-style:italic;height:20px">840</div>
<div class="c" style="left:858px;top:305px;width:156px;height:20px;">USA</div>
<div class="c" style="left:1018px;top:305px;width:156px;height:20px;">US</div>
<div class="c" style="left:1178px;top:305px;width:156px;height:20px;"><span style="font-size:12px;letter-spacing:-0.8px">北</span><span style="font-size:12px;letter-spacing:-1.7px">アメリカ</span></div>
<div class="c" style="left:1338px;top:305px;width:156px;height:20px;letter-spacing:-0.15px;">ISO 3166-2:US</div>
<div style="position:absolute;left:214px;top:346px;width:1220px;height:1px;background:#d6d6d6"></div>
<div style="position:absolute;left:186px;top:346px;width:28px;height:1px;background:#b0b0b0"></div>
<div class="c" style="left:186px;top:326px;width:28px;text-align:center;color:#333;font-size:12px">6</div>
<div class="c" style="left:218px;top:326px;width:156px;height:20px;"><span style="font-size:12px;letter-spacing:-1.7px">アメリカ</span><span style="font-size:12px;letter-spacing:-0.8px">領</span><span style="font-size:12px;letter-spacing:-1.7px">ヴァージン</span><span style="font-size:12px;letter-spacing:-0.8px">諸島</span></div>
<div class="c" style="left:378px;top:326px;width:156px;height:20px;">Virgin Islands (U.S.)</div>
<div class="c" style="left:538px;top:326px;width:156px;height:20px;">Vierges des États-Unis (les Îles)</div>
<div class="c" style="left:695px;top:326px;width:155px;text-align:right;font-style:italic;height:20px">850</div>
<div class="c" style="left:858px;top:326px;width:156px;height:20px;">VIR</div>
<div class="c" style="left:1018px;top:326px;width:156px;height:20px;">VI</div>
<div class="c" style="left:1178px;top:326px;width:156px;height:20px;"><span style="font-size:12px;letter-spacing:-0.8px">中央</span><span style="font-size:12px;letter-spacing:-1.7px">アメリカ</span></div>
<div class="c" style="left:1338px;top:326px;width:156px;height:20px;letter-spacing:-0.15px;">ISO 3166-2:VI</div>
<div style="position:absolute;left:214px;top:367px;width:1220px;height:1px;background:#d6d6d6"></div>
<div style="position:absolute;left:186px;top:367px;width:28px;height:1px;background:#b0b0b0"></div>
<div class="c" style="left:186px;top:347px;width:28px;text-align:center;color:#333;font-size:12px">7</div>
<div class="c" style="left:218px;top:347px;width:156px;height:20px;"><span style="font-size:12px;letter-spacing:-1.7px">アメリカ</span><span style="font-size:12px;letter-spacing:-0.8px">領</span><span style="font-size:12px;letter-spacing:-1.7px">サモア</span></div>
<div class="c" style="left:378px;top:347px;width:156px;height:20px;">American Samoa</div>
<div class="c" style="left:538px;top:347px;width:156px;height:20px;">Samoa américaines</div>
<div class="c" style="left:695px;top:347px;width:155px;text-align:right;font-style:italic;height:20px">16</div>
<div class="c" style="left:858px;top:347px;width:156px;height:20px;">ASM</div>
<div class="c" style="left:1018px;top:347px;width:156px;height:20px;">AS</div>
<div class="c" style="left:1178px;top:347px;width:156px;height:20px;"><span style="font-size:12px;letter-spacing:-1.7px">オセアニア</span></div>
<div class="c" style="left:1338px;top:347px;width:156px;height:20px;letter-spacing:-0.15px;">ISO 3166-2:AS</div>
<div style="position:absolute;left:214px;top:388px;width:1220px;height:1px;background:#d6d6d6"></div>
<div style="position:absolute;left:186px;top:388px;width:28px;height:1px;background:#b0b0b0"></div>
<div class="c" style="left:186px;top:368px;width:28px;text-align:center;color:#333;font-size:12px">8</div>
<div class="c" style="left:218px;top:368px;width:156px;height:20px;"><span style="font-size:12px;letter-spacing:-1.7px">アラブ</span><span style="font-size:12px;letter-spacing:-0.8px">首長国連邦</span></div>
<div class="c" style="left:378px;top:368px;width:156px;height:20px;">United Arab Emirates</div>
<div class="c" style="left:538px;top:368px;width:156px;height:20px;">Émirats arabes unis</div>
<div class="c" style="left:695px;top:368px;width:155px;text-align:right;font-style:italic;height:20px">784</div>
<div class="c" style="left:858px;top:368px;width:156px;height:20px;">ARE</div>
<div class="c" style="left:1018px;top:368px;width:156px;height:20px;">AE</div>
<div class="c" style="left:1178px;top:368px;width:156px;height:20px;"><span style="font-size:12px;letter-spacing:-0.8px">中東</span></div>
<div class="c" style="left:1338px;top:368px;width:156px;height:20px;letter-spacing:-0.15px;">ISO 3166-2:AE</div>
<div style="position:absolute;left:214px;top:409px;width:1220px;height:1px;background:#d6d6d6"></div>
<div style="position:absolute;left:186px;top:409px;width:28px;height:1px;background:#b0b0b0"></div>
<div class="c" style="left:186px;top:389px;width:28px;text-align:center;color:#333;font-size:12px">9</div>
<div class="c" style="left:218px;top:389px;width:156px;height:20px;"><span style="font-size:12px;letter-spacing:-1.7px">アルジェリア</span></div>
<div class="c" style="left:378px;top:389px;width:156px;height:20px;">Algeria</div>
<div class="c" style="left:538px;top:389px;width:156px;height:20px;">Algérie</div>
<div class="c" style="left:695px;top:389px;width:155px;text-align:right;font-style:italic;height:20px">12</div>
<div class="c" style="left:858px;top:389px;width:156px;height:20px;">DZA</div>
<div class="c" style="left:1018px;top:389px;width:156px;height:20px;">DZ</div>
<div class="c" style="left:1178px;top:389px;width:156px;height:20px;"><span style="font-size:12px;letter-spacing:-0.8px">北</span><span style="font-size:12px;letter-spacing:-1.7px">アフリカ</span></div>
<div class="c" style="left:1338px;top:389px;width:156px;height:20px;letter-spacing:-0.15px;">ISO 3166-2:DZ</div>
<div style="position:absolute;left:214px;top:430px;width:1220px;height:1px;background:#d6d6d6"></div>
<div style="position:absolute;left:186px;top:430px;width:28px;height:1px;background:#b0b0b0"></div>
<div class="c" style="left:186px;top:410px;width:28px;text-align:center;color:#333;font-size:12px">10</div>
<div class="c" style="left:218px;top:410px;width:156px;height:20px;"><span style="font-size:12px;letter-spacing:-1.7px">アルゼンチン</span></div>
<div class="c" style="left:378px;top:410px;width:156px;height:20px;">Argentina</div>
<div class="c" style="left:538px;top:410px;width:156px;height:20px;">Argentine</div>
<div class="c" style="left:695px;top:410px;width:155px;text-align:right;font-style:italic;height:20px">32</div>
<div class="c" style="left:858px;top:410px;width:156px;height:20px;">ARG</div>
<div class="c" style="left:1018px;top:410px;width:156px;height:20px;">AR</div>
<div class="c" style="left:1178px;top:410px;width:156px;height:20px;"><span style="font-size:12px;letter-spacing:-0.8px">南</span><span style="font-size:12px;letter-spacing:-1.7px">アメリカ</span></div>
<div class="c" style="left:1338px;top:410px;width:156px;height:20px;letter-spacing:-0.15px;">ISO 3166-2:AR</div>
<div style="position:absolute;left:214px;top:451px;width:1220px;height:1px;background:#d6d6d6"></div>
<div style="position:absolute;left:186px;top:451px;width:28px;height:1px;background:#b0b0b0"></div>
<div class="c" style="left:186px;top:431px;width:28px;text-align:center;color:#333;font-size:12px">11</div>
<div class="c" style="left:218px;top:431px;width:156px;height:20px;"><span style="font-size:12px;letter-spacing:-1.7px">アルバ</span></div>
<div class="c" style="left:378px;top:431px;width:156px;height:20px;">Aruba</div>
<div class="c" style="left:538px;top:431px;width:156px;height:20px;">Aruba</div>
<div class="c" style="left:695px;top:431px;width:155px;text-align:right;font-style:italic;height:20px">533</div>
<div class="c" style="left:858px;top:431px;width:156px;height:20px;">ABW</div>
<div class="c" style="left:1018px;top:431px;width:156px;height:20px;">AW</div>
<div class="c" style="left:1178px;top:431px;width:156px;height:20px;"><span style="font-size:12px;letter-spacing:-0.8px">中央</span><span style="font-size:12px;letter-spacing:-1.7px">アメリカ</span></div>
<div class="c" style="left:1338px;top:431px;width:156px;height:20px;letter-spacing:-0.15px;">ISO 3166-2:AW</div>
<div style="position:absolute;left:214px;top:472px;width:1220px;height:1px;background:#d6d6d6"></div>
<div style="position:absolute;left:186px;top:472px;width:28px;height:1px;background:#b0b0b0"></div>
<div class="c" style="left:186px;top:452px;width:28px;text-align:center;color:#333;font-size:12px">12</div>
<div class="c" style="left:218px;top:452px;width:156px;height:20px;"><span style="font-size:12px;letter-spacing:-1.7px">アルバニア</span></div>
<div class="c" style="left:378px;top:452px;width:156px;height:20px;">Albania</div>
<div class="c" style="left:538px;top:452px;width:156px;height:20px;">Albanie</div>
<div class="c" style="left:695px;top:452px;width:155px;text-align:right;font-style:italic;height:20px">8</div>
<div class="c" style="left:858px;top:452px;width:156px;height:20px;">ALB</div>
<div class="c" style="left:1018px;top:452px;width:156px;height:20px;">AL</div>
<div class="c" style="left:1178px;top:452px;width:156px;height:20px;"><span style="font-size:12px;letter-spacing:-0.8px">東</span><span style="font-size:12px;letter-spacing:-1.7px">ヨーロッパ</span></div>
<div class="c" style="left:1338px;top:452px;width:156px;height:20px;letter-spacing:-0.15px;">ISO 3166-2:AL</div>
<div style="position:absolute;left:214px;top:493px;width:1220px;height:1px;background:#d6d6d6"></div>
<div style="position:absolute;left:186px;top:493px;width:28px;height:1px;background:#b0b0b0"></div>
<div class="c" style="left:186px;top:473px;width:28px;text-align:center;color:#333;font-size:12px">13</div>
<div class="c" style="left:218px;top:473px;width:156px;height:20px;"><span style="font-size:12px;letter-spacing:-1.7px">アルメニア</span></div>
<div class="c" style="left:378px;top:473px;width:156px;height:20px;">Armenia</div>
<div class="c" style="left:538px;top:473px;width:156px;height:20px;">Arménie</div>
<div class="c" style="left:695px;top:473px;width:155px;text-align:right;font-style:italic;height:20px">51</div>
<div class="c" style="left:858px;top:473px;width:156px;height:20px;">ARM</div>
<div class="c" style="left:1018px;top:473px;width:156px;height:20px;">AM</div>
<div class="c" style="left:1178px;top:473px;width:156px;height:20px;"><span style="font-size:12px;letter-spacing:-0.8px">東</span><span style="font-size:12px;letter-spacing:-1.7px">ヨーロッパ</span></div>
<div class="c" style="left:1338px;top:473px;width:156px;height:20px;letter-spacing:-0.15px;">ISO 3166-2:AM</div>
<div style="position:absolute;left:214px;top:514px;width:1220px;height:1px;background:#d6d6d6"></div>
<div style="position:absolute;left:186px;top:514px;width:28px;height:1px;background:#b0b0b0"></div>
<div class="c" style="left:186px;top:494px;width:28px;text-align:center;color:#333;font-size:12px">14</div>
<div class="c" style="left:218px;top:494px;width:156px;height:20px;"><span style="font-size:12px;letter-spacing:-1.7px">アンギラ</span></div>
<div class="c" style="left:378px;top:494px;width:156px;height:20px;">Anguilla</div>
<div class="c" style="left:538px;top:494px;width:156px;height:20px;">Anguilla</div>
<div class="c" style="left:695px;top:494px;width:155px;text-align:right;font-style:italic;height:20px">660</div>
<div class="c" style="left:858px;top:494px;width:156px;height:20px;">AIA</div>
<div class="c" style="left:1018px;top:494px;width:156px;height:20px;">AI</div>
<div class="c" style="left:1178px;top:494px;width:156px;height:20px;"><span style="font-size:12px;letter-spacing:-0.8px">中央</span><span style="font-size:12px;letter-spacing:-1.7px">アメリカ</span></div>
<div class="c" style="left:1338px;top:494px;width:156px;height:20px;letter-spacing:-0.15px;">ISO 3166-2:AI</div>
<div style="position:absolute;left:214px;top:535px;width:1220px;height:1px;background:#d6d6d6"></div>
<div style="position:absolute;left:186px;top:535px;width:28px;height:1px;background:#b0b0b0"></div>
<div class="c" style="left:186px;top:515px;width:28px;text-align:center;color:#333;font-size:12px">15</div>
<div class="c" style="left:218px;top:515px;width:156px;height:20px;"><span style="font-size:12px;letter-spacing:-1.7px">アンゴラ</span></div>
<div class="c" style="left:378px;top:515px;width:156px;height:20px;">Angola</div>
<div class="c" style="left:538px;top:515px;width:156px;height:20px;">Angola</div>
<div class="c" style="left:695px;top:515px;width:155px;text-align:right;font-style:italic;height:20px">24</div>
<div class="c" style="left:858px;top:515px;width:156px;height:20px;">AGO</div>
<div class="c" style="left:1018px;top:515px;width:156px;height:20px;">AO</div>
<div class="c" style="left:1178px;top:515px;width:156px;height:20px;"><span style="font-size:12px;letter-spacing:-0.8px">南</span><span style="font-size:12px;letter-spacing:-1.7px">アフリカ</span></div>
<div class="c" style="left:1338px;top:515px;width:156px;height:20px;letter-spacing:-0.15px;">ISO 3166-2:AO</div>
<div style="position:absolute;left:214px;top:556px;width:1220px;height:1px;background:#d6d6d6"></div>
<div style="position:absolute;left:186px;top:556px;width:28px;height:1px;background:#b0b0b0"></div>
<div class="c" style="left:186px;top:536px;width:28px;text-align:center;color:#333;font-size:12px">16</div>
<div class="c" style="left:218px;top:536px;width:156px;height:20px;"><span style="font-size:12px;letter-spacing:-1.7px">アンティグア・バーブーダ</span></div>
<div class="c" style="left:378px;top:536px;width:156px;height:20px;">Antigua and Barbuda</div>
<div class="c" style="left:538px;top:536px;width:156px;height:20px;">Antigua-et-Barbuda</div>
<div class="c" style="left:695px;top:536px;width:155px;text-align:right;font-style:italic;height:20px">28</div>
<div class="c" style="left:858px;top:536px;width:156px;height:20px;">ATG</div>
<div class="c" style="left:1018px;top:536px;width:156px;height:20px;">AG</div>
<div class="c" style="left:1178px;top:536px;width:156px;height:20px;"><span style="font-size:12px;letter-spacing:-0.8px">中央</span><span style="font-size:12px;letter-spacing:-1.7px">アメリカ</span></div>
<div class="c" style="left:1338px;top:536px;width:156px;height:20px;letter-spacing:-0.15px;">ISO 3166-2:AG</div>
<div style="position:absolute;left:214px;top:577px;width:1220px;height:1px;background:#d6d6d6"></div>
<div style="position:absolute;left:186px;top:577px;width:28px;height:1px;background:#b0b0b0"></div>
<div class="c" style="left:186px;top:557px;width:28px;text-align:center;color:#333;font-size:12px">17</div>
<div class="c" style="left:218px;top:557px;width:156px;height:20px;"><span style="font-size:12px;letter-spacing:-1.7px">アンドラ</span></div>
<div class="c" style="left:378px;top:557px;width:156px;height:20px;">Andorra</div>
<div class="c" style="left:538px;top:557px;width:156px;height:20px;">Andorre</div>
<div class="c" style="left:695px;top:557px;width:155px;text-align:right;font-style:italic;height:20px">20</div>
<div class="c" style="left:858px;top:557px;width:156px;height:20px;">AND</div>
<div class="c" style="left:1018px;top:557px;width:156px;height:20px;">AD</div>
<div class="c" style="left:1178px;top:557px;width:156px;height:20px;"><span style="font-size:12px;letter-spacing:-0.8px">西</span><span style="font-size:12px;letter-spacing:-1.7px">ヨーロッパ</span></div>
<div class="c" style="left:1338px;top:557px;width:156px;height:20px;letter-spacing:-0.15px;">ISO 3166-2:AD</div>
<div style="position:absolute;left:214px;top:598px;width:1220px;height:1px;background:#d6d6d6"></div>
<div style="position:absolute;left:186px;top:598px;width:28px;height:1px;background:#b0b0b0"></div>
<div class="c" style="left:186px;top:578px;width:28px;text-align:center;color:#333;font-size:12px">18</div>
<div class="c" style="left:218px;top:578px;width:156px;height:20px;"><span style="font-size:12px;letter-spacing:-1.7px">イエメン</span></div>
<div class="c" style="left:378px;top:578px;width:156px;height:20px;">Yemen</div>
<div class="c" style="left:538px;top:578px;width:156px;height:20px;">Yémen</div>
<div class="c" style="left:695px;top:578px;width:155px;text-align:right;font-style:italic;height:20px">887</div>
<div class="c" style="left:858px;top:578px;width:156px;height:20px;">YEM</div>
<div class="c" style="left:1018px;top:578px;width:156px;height:20px;">YE</div>
<div class="c" style="left:1178px;top:578px;width:156px;height:20px;"><span style="font-size:12px;letter-spacing:-0.8px">中東</span></div>
<div class="c" style="left:1338px;top:578px;width:156px;height:20px;letter-spacing:-0.15px;">ISO 3166-2:YE</div>
<div style="position:absolute;left:214px;top:619px;width:1220px;height:1px;background:#d6d6d6"></div>
<div style="position:absolute;left:186px;top:619px;width:28px;height:1px;background:#b0b0b0"></div>
<div class="c" style="left:186px;top:599px;width:28px;text-align:center;color:#333;font-size:12px">19</div>
<div class="c" style="left:218px;top:599px;width:156px;height:20px;"><span style="font-size:12px;letter-spacing:-1.7px">イギリス</span></div>
<div class="c" style="left:378px;top:599px;width:156px;height:20px;">United Kingdom of Great Brit...</div>
<div class="c" style="left:538px;top:599px;width:156px;height:20px;">Royaume-Uni de Grande-Bret...</div>
<div class="c" style="left:695px;top:599px;width:155px;text-align:right;font-style:italic;height:20px">826</div>
<div class="c" style="left:858px;top:599px;width:156px;height:20px;">GBR</div>
<div class="c" style="left:1018px;top:599px;width:156px;height:20px;">GB</div>
<div class="c" style="left:1178px;top:599px;width:156px;height:20px;"><span style="font-size:12px;letter-spacing:-0.8px">西</span><span style="font-size:12px;letter-spacing:-1.7px">ヨーロッパ</span></div>
<div class="c" style="left:1338px;top:599px;width:156px;height:20px;letter-spacing:-0.15px;">ISO 3166-2:GB</div>
<div style="position:absolute;left:214px;top:640px;width:1220px;height:1px;background:#d6d6d6"></div>
<div style="position:absolute;left:186px;top:640px;width:28px;height:1px;background:#b0b0b0"></div>
<div class="c" style="left:186px;top:620px;width:28px;text-align:center;color:#333;font-size:12px">20</div>
<div class="c" style="left:218px;top:620px;width:156px;height:20px;"><span style="font-size:12px;letter-spacing:-1.7px">イギリス</span><span style="font-size:12px;letter-spacing:-0.8px">領</span><span style="font-size:12px;letter-spacing:-1.7px">インド</span><span style="font-size:12px;letter-spacing:-0.8px">洋地域</span></div>
<div class="c" style="left:378px;top:620px;width:156px;height:20px;">British Indian Ocean Territory</div>
<div class="c" style="left:538px;top:620px;width:156px;height:20px;">Indien (le Territoire britanniq...</div>
<div class="c" style="left:695px;top:620px;width:155px;text-align:right;font-style:italic;height:20px">86</div>
<div class="c" style="left:858px;top:620px;width:156px;height:20px;">IOT</div>
<div class="c" style="left:1018px;top:620px;width:156px;height:20px;">IO</div>
<div class="c" style="left:1178px;top:620px;width:156px;height:20px;"><span style="font-size:12px;letter-spacing:-1.7px">インド</span><span style="font-size:12px;letter-spacing:-0.8px">洋地域</span></div>
<div class="c" style="left:1338px;top:620px;width:156px;height:20px;letter-spacing:-0.15px;">ISO 3166-2:IO</div>
<div style="position:absolute;left:214px;top:661px;width:1220px;height:1px;background:#d6d6d6"></div>
<div style="position:absolute;left:186px;top:661px;width:28px;height:1px;background:#b0b0b0"></div>
<div class="c" style="left:186px;top:641px;width:28px;text-align:center;color:#333;font-size:12px">21</div>
<div class="c" style="left:218px;top:641px;width:156px;height:20px;"><span style="font-size:12px;letter-spacing:-1.7px">イギリス</span><span style="font-size:12px;letter-spacing:-0.8px">領</span><span style="font-size:12px;letter-spacing:-1.7px">ヴァージン</span><span style="font-size:12px;letter-spacing:-0.8px">諸島</span></div>
<div class="c" style="left:378px;top:641px;width:156px;height:20px;">Virgin Islands (British)</div>
<div class="c" style="left:538px;top:641px;width:156px;height:20px;">Îles Vierges britanniques</div>
<div class="c" style="left:695px;top:641px;width:155px;text-align:right;font-style:italic;height:20px">92</div>
<div class="c" style="left:858px;top:641px;width:156px;height:20px;">VGB</div>
<div class="c" style="left:1018px;top:641px;width:156px;height:20px;">VG</div>
<div class="c" style="left:1178px;top:641px;width:156px;height:20px;"><span style="font-size:12px;letter-spacing:-0.8px">中央</span><span style="font-size:12px;letter-spacing:-1.7px">アメリカ</span></div>
<div class="c" style="left:1338px;top:641px;width:156px;height:20px;letter-spacing:-0.15px;">ISO 3166-2:VG</div>
<div style="position:absolute;left:214px;top:682px;width:1220px;height:1px;background:#d6d6d6"></div>
<div style="position:absolute;left:186px;top:682px;width:28px;height:1px;background:#b0b0b0"></div>
<div class="c" style="left:186px;top:662px;width:28px;text-align:center;color:#333;font-size:12px">22</div>
<div class="c" style="left:218px;top:662px;width:156px;height:20px;"><span style="font-size:12px;letter-spacing:-1.7px">イスラエル</span></div>
<div class="c" style="left:378px;top:662px;width:156px;height:20px;">Israel</div>
<div class="c" style="left:538px;top:662px;width:156px;height:20px;">Israël</div>
<div class="c" style="left:695px;top:662px;width:155px;text-align:right;font-style:italic;height:20px">376</div>
<div class="c" style="left:858px;top:662px;width:156px;height:20px;">ISR</div>
<div class="c" style="left:1018px;top:662px;width:156px;height:20px;">IL</div>
<div class="c" style="left:1178px;top:662px;width:156px;height:20px;"><span style="font-size:12px;letter-spacing:-0.8px">中東</span></div>
<div class="c" style="left:1338px;top:662px;width:156px;height:20px;letter-spacing:-0.15px;">ISO 3166-2:IL</div>
<div style="position:absolute;left:214px;top:703px;width:1220px;height:1px;background:#d6d6d6"></div>
<div style="position:absolute;left:186px;top:703px;width:28px;height:1px;background:#b0b0b0"></div>
<div class="c" style="left:186px;top:683px;width:28px;text-align:center;color:#333;font-size:12px">23</div>
<div class="c" style="left:218px;top:683px;width:156px;height:20px;"><span style="font-size:12px;letter-spacing:-1.7px">イタリア</span></div>
<div class="c" style="left:378px;top:683px;width:156px;height:20px;">Italy</div>
<div class="c" style="left:538px;top:683px;width:156px;height:20px;">Italie</div>
<div class="c" style="left:695px;top:683px;width:155px;text-align:right;font-style:italic;height:20px">380</div>
<div class="c" style="left:858px;top:683px;width:156px;height:20px;">ITA</div>
<div class="c" style="left:1018px;top:683px;width:156px;height:20px;">IT</div>
<div class="c" style="left:1178px;top:683px;width:156px;height:20px;"><span style="font-size:12px;letter-spacing:-0.8px">西</span><span style="font-size:12px;letter-spacing:-1.7px">ヨーロッパ</span></div>
<div class="c" style="left:1338px;top:683px;width:156px;height:20px;letter-spacing:-0.15px;">ISO 3166-2:IT</div>
<div style="position:absolute;left:214px;top:724px;width:1220px;height:1px;background:#d6d6d6"></div>
<div style="position:absolute;left:186px;top:724px;width:28px;height:1px;background:#b0b0b0"></div>
<div class="c" style="left:186px;top:704px;width:28px;text-align:center;color:#333;font-size:12px">24</div>
<div class="c" style="left:218px;top:704px;width:156px;height:20px;"><span style="font-size:12px;letter-spacing:-1.7px">イラク</span></div>
<div class="c" style="left:378px;top:704px;width:156px;height:20px;">Iraq</div>
<div class="c" style="left:538px;top:704px;width:156px;height:20px;">Irak</div>
<div class="c" style="left:695px;top:704px;width:155px;text-align:right;font-style:italic;height:20px">368</div>
<div class="c" style="left:858px;top:704px;width:156px;height:20px;">IRQ</div>
<div class="c" style="left:1018px;top:704px;width:156px;height:20px;">IQ</div>
<div class="c" style="left:1178px;top:704px;width:156px;height:20px;"><span style="font-size:12px;letter-spacing:-0.8px">中東</span></div>
<div class="c" style="left:1338px;top:704px;width:156px;height:20px;letter-spacing:-0.15px;">ISO 3166-2:IQ</div>
<div style="position:absolute;left:214px;top:745px;width:1220px;height:1px;background:#d6d6d6"></div>
<div style="position:absolute;left:186px;top:745px;width:28px;height:1px;background:#b0b0b0"></div>
<div class="c" style="left:186px;top:725px;width:28px;text-align:center;color:#333;font-size:12px">25</div>
<div class="c" style="left:218px;top:725px;width:156px;height:20px;"><span style="font-size:12px;letter-spacing:-1.7px">イラン・イスラム</span><span style="font-size:12px;letter-spacing:-0.8px">共和国</span></div>
<div class="c" style="left:378px;top:725px;width:156px;height:20px;">Iran (Islamic Republic of)</div>
<div class="c" style="left:538px;top:725px;width:156px;height:20px;">Iran (République islamique d&#x27;)</div>
<div class="c" style="left:695px;top:725px;width:155px;text-align:right;font-style:italic;height:20px">364</div>
<div class="c" style="left:858px;top:725px;width:156px;height:20px;">IRN</div>
<div class="c" style="left:1018px;top:725px;width:156px;height:20px;">IR</div>
<div class="c" style="left:1178px;top:725px;width:156px;height:20px;"><span style="font-size:12px;letter-spacing:-0.8px">中東</span></div>
<div class="c" style="left:1338px;top:725px;width:156px;height:20px;letter-spacing:-0.15px;">ISO 3166-2:IR</div>
<div style="position:absolute;left:214px;top:766px;width:1220px;height:1px;background:#d6d6d6"></div>
<div style="position:absolute;left:186px;top:766px;width:28px;height:1px;background:#b0b0b0"></div>
<div class="c" style="left:186px;top:746px;width:28px;text-align:center;color:#333;font-size:12px">26</div>
<div class="c" style="left:218px;top:746px;width:156px;height:20px;"><span style="font-size:12px;letter-spacing:-1.7px">インド</span></div>
<div class="c" style="left:378px;top:746px;width:156px;height:20px;">India</div>
<div class="c" style="left:538px;top:746px;width:156px;height:20px;">Inde</div>
<div class="c" style="left:695px;top:746px;width:155px;text-align:right;font-style:italic;height:20px">356</div>
<div class="c" style="left:858px;top:746px;width:156px;height:20px;">IND</div>
<div class="c" style="left:1018px;top:746px;width:156px;height:20px;">IN</div>
<div class="c" style="left:1178px;top:746px;width:156px;height:20px;"><span style="font-size:12px;letter-spacing:-0.8px">南</span><span style="font-size:12px;letter-spacing:-1.7px">アジア</span></div>
<div class="c" style="left:1338px;top:746px;width:156px;height:20px;letter-spacing:-0.15px;">ISO 3166-2:IN</div>
<div style="position:absolute;left:214px;top:787px;width:1220px;height:1px;background:#d6d6d6"></div>
<div style="position:absolute;left:186px;top:787px;width:28px;height:1px;background:#b0b0b0"></div>
<div class="c" style="left:186px;top:767px;width:28px;text-align:center;color:#333;font-size:12px">27</div>
<div class="c" style="left:218px;top:767px;width:156px;height:20px;"><span style="font-size:12px;letter-spacing:-1.7px">インドネシア</span></div>
<div class="c" style="left:378px;top:767px;width:156px;height:20px;">Indonesia</div>
<div class="c" style="left:538px;top:767px;width:156px;height:20px;">Indonésie</div>
<div class="c" style="left:695px;top:767px;width:155px;text-align:right;font-style:italic;height:20px">360</div>
<div class="c" style="left:858px;top:767px;width:156px;height:20px;">IDN</div>
<div class="c" style="left:1018px;top:767px;width:156px;height:20px;">ID</div>
<div class="c" style="left:1178px;top:767px;width:156px;height:20px;"><span style="font-size:12px;letter-spacing:-0.8px">東南</span><span style="font-size:12px;letter-spacing:-1.7px">アジア</span></div>
<div class="c" style="left:1338px;top:767px;width:156px;height:20px;letter-spacing:-0.15px;">ISO 3166-2:ID</div>
<div style="position:absolute;left:214px;top:808px;width:1220px;height:1px;background:#d6d6d6"></div>
<div style="position:absolute;left:186px;top:808px;width:28px;height:1px;background:#b0b0b0"></div>
<div class="c" style="left:186px;top:788px;width:28px;text-align:center;color:#333;font-size:12px">28</div>
<div class="c" style="left:218px;top:788px;width:156px;height:13px;"><span style="font-size:12px;letter-spacing:-1.7px">ウォリス・フツナ</span></div>
<div class="c" style="left:378px;top:788px;width:156px;height:13px;">Wallis and Futuna</div>
<div class="c" style="left:538px;top:788px;width:156px;height:13px;">Wallis-et-Futuna</div>
<div class="c" style="left:695px;top:788px;width:155px;text-align:right;font-style:italic;height:13px">876</div>
<div class="c" style="left:858px;top:788px;width:156px;height:13px;">WLF</div>
<div class="c" style="left:1018px;top:788px;width:156px;height:13px;">WF</div>
<div class="c" style="left:1178px;top:788px;width:156px;height:13px;"><span style="font-size:12px;letter-spacing:-1.7px">オセアニア</span></div>
<div class="c" style="left:1338px;top:788px;width:156px;height:13px;letter-spacing:-0.15px;">ISO 3166-2:WF</div>
<div style="position:absolute;left:186px;top:809px;width:28px;height:8px;overflow:hidden"><div class="c" style="left:0;top:0px;width:28px;text-align:center;color:#333;font-size:12px">29</div></div>
<div style="position:absolute;left:214px;top:801px;width:1220px;height:17px;background:#f0f0f0"></div>
<div style="position:absolute;left:249px;top:802px;width:974px;height:14px;background:#cdcdcd"></div>
<svg style="left:232px;top:804px" width="9" height="12" viewBox="0 0 9 12"><path d="M7.5 0.8L2.2 6L7.5 11.2" stroke="#555" stroke-width="2.8" fill="none"/></svg>
<svg style="left:1408px;top:804px" width="9" height="12" viewBox="0 0 9 12"><path d="M1.5 0.8L6.8 6L1.5 11.2" stroke="#555" stroke-width="2.8" fill="none"/></svg>
<div style="position:absolute;left:1434px;top:221px;width:17px;height:597px;background:#f0f0f0"></div>
<div style="position:absolute;left:1435px;top:255px;width:15px;height:281px;background:#cdcdcd"></div>
<svg style="left:1437px;top:238px" width="12" height="9" viewBox="0 0 12 9"><path d="M0.8 7.5L6 2.2L11.2 7.5" stroke="#555" stroke-width="2.8" fill="none"/></svg>
<svg style="left:1437px;top:774px" width="12" height="9" viewBox="0 0 12 9"><path d="M0.8 1.5L6 6.8L11.2 1.5" stroke="#555" stroke-width="2.8" fill="none"/></svg>
<div style="position:absolute;left:1434px;top:801px;width:17px;height:17px;background:#f0f0f0"></div>
<div style="position:absolute;left:185px;top:817px;width:1266px;height:1px;background:#c6c6c6"></div>
<div style="position:absolute;left:1451px;top:153px;width:4px;height:665px;background:#e6e6e6"></div>
<div style="position:absolute;left:1455px;top:153px;width:1px;height:665px;background:#b9b9b9"></div>
<svg style="left:199px;top:169px" width="15" height="15" viewBox="0 0 15 15"><path d="M1 1L14 14M14 1L1 14" stroke="#c8c8c8" stroke-width="2"/></svg>
<svg style="left:236px;top:170px" width="16" height="12" viewBox="0 0 16 12"><path d="M1 6L5.5 10.5L15 1" stroke="#c8c8c8" stroke-width="2.2" fill="none"/></svg>
<div class="t" style="left:270px;top:165px;height:18px;line-height:18px;font-family:'Liberation Serif',serif;font-style:italic;font-size:18px;color:#6a6a6a;letter-spacing:-0.5px">fx</div>
<div class="t m" style="left:308px;top:170px;color:#1a1a1a">= Table.RenameColumns(<span style="font-size:12px;letter-spacing:0.2px">変更</span><span style="font-size:12px;letter-spacing:0.2px">された</span><span style="font-size:12px;letter-spacing:0.2px">型</span>,{{<span style="color:#a31515">&quot;Column1&quot;</span>, <span style="color:#a31515">&quot;<span style="font-size:12px;letter-spacing:0.2px">国名</span><span style="font-size:12px;letter-spacing:0.2px">・</span><span style="font-size:12px;letter-spacing:0.2px">地域名</span>&quot;</span>}, {<span style="color:#a31515">&quot;Column2&quot;</span>, <span style="color:#a31515">&quot;<span style="font-size:12px;letter-spacing:0.2px">英語名</span>&quot;</span>}, {<span style="color:#a31515">&quot;Column3&quot;</span>, <span style="color:#a31515">&quot;<span style="font-size:12px;letter-spacing:0.2px">フランス</span><span style="font-size:12px;letter-spacing:0.2px">語名</span>&quot;</span>}, {<span style="color:#a31515">&quot;Column4&quot;</span>, <span style="color:#a31515">&quot;numeric&quot;</span>}, {<span style="color:#a31515">&quot;Column5&quot;</span>, <span style="color:#a31515">&quot;alpha_3&quot;</span>},</div>
<div style="position:absolute;left:299px;top:189px;width:1100px;height:1px;overflow:hidden"><div class="t" style="left:281px;top:-3px;color:#a31515;font-size:12px;letter-spacing:-1px">場所</div><div class="t" style="left:420px;top:-3px;color:#a31515;font-size:12px;letter-spacing:-1px">各行政区分</div></div>
<div style="position:absolute;left:1415px;top:168px;width:14px;height:20px;background:#c4c4c4"></div>
<svg style="left:1432px;top:174px" width="12" height="7" viewBox="0 0 12 7"><path d="M0.5 0.5L6 6L11.5 0.5" stroke="#444" stroke-width="1.5" fill="none"/></svg>
<div class="t" style="left:1469px;top:166px;height:28px;line-height:28px;font-size:21px;color:#217346;transform:scaleX(0.95);transform-origin:0 50%">クエリの設定</div>
<svg style="left:1684px;top:178px" width="11" height="11" viewBox="0 0 11 11"><path d="M0.5 0.5L10.5 10.5M10.5 0.5L0.5 10.5" stroke="#555" stroke-width="1.2"/></svg>
<svg style="left:1466px;top:217px" width="6" height="6" viewBox="0 0 6 6"><path d="M6 0V6H0z" fill="#444"/></svg>
<div class="t b" style="left:1479px;top:211px;color:#217346;transform:scaleX(1.000);-webkit-text-stroke:0.25px currentColor;">プロパティ</div>
<div class="t " style="left:1479px;top:232px;transform:scaleX(1.000);-webkit-text-stroke:0.25px currentColor;">名前</div>
<div style="position:absolute;left:1479px;top:250px;width:218px;height:23px;background:#fff;border:1px solid #a6a6a6"></div>
<div class="t " style="left:1485px;top:253px;color:#111;transform:scaleX(1.000);-webkit-text-stroke:0.25px currentColor;">テーブル 6</div>
<div class="t " style="left:1480px;top:279px;color:#3a6eb5;transform:scaleX(0.991);-webkit-text-stroke:0.25px currentColor;">すべてのプロパティ</div>
<svg style="left:1466px;top:318px" width="6" height="6" viewBox="0 0 6 6"><path d="M6 0V6H0z" fill="#444"/></svg>
<div class="t b" style="left:1479px;top:312px;color:#217346;transform:scaleX(1.000);-webkit-text-stroke:0.25px currentColor;">適用したステップ</div>
<div style="position:absolute;left:1479px;top:335px;width:218px;height:463px;background:#fff;border:1px solid #a6a6a6"></div>
<div style="position:absolute;left:1480px;top:396px;width:216px;height:20px;background:#d4eedf"></div>
<div class="t " style="left:1500px;top:338px;transform:scaleX(1.029);-webkit-text-stroke:0.25px currentColor;">ソース</div>
<div class="t " style="left:1500px;top:358px;transform:scaleX(0.997);-webkit-text-stroke:0.25px currentColor;">HTML から抽出されたテーブル</div>
<div class="t " style="left:1500px;top:378px;transform:scaleX(1.014);-webkit-text-stroke:0.25px currentColor;">変更された型</div>
<div class="t " style="left:1500px;top:398px;transform:scaleX(1.000);-webkit-text-stroke:0.25px currentColor;">名前が変更された列</div>
<svg style="left:1485px;top:400px" width="11" height="11" viewBox="0 0 11 11"><path d="M0.5 0.5L10.5 10.5M10.5 0.5L0.5 10.5" stroke="#555" stroke-width="1.5"/></svg>
<svg style="left:1677px;top:340px" width="12" height="12" viewBox="0 0 12 12"><g fill="#b3b3b3" transform="translate(5.6 5.6)"><circle r="4"/><rect x="-5.6" y="-1.1" width="11.2" height="2.2"/><rect x="-5.6" y="-1.1" width="11.2" height="2.2" transform="rotate(60)"/><rect x="-5.6" y="-1.1" width="11.2" height="2.2" transform="rotate(-60)"/></g><circle cx="5.6" cy="5.6" r="1.9" fill="#fff"/></svg>
<svg style="left:1677px;top:360px" width="12" height="12" viewBox="0 0 12 12"><g fill="#b3b3b3" transform="translate(5.6 5.6)"><circle r="4"/><rect x="-5.6" y="-1.1" width="11.2" height="2.2"/><rect x="-5.6" y="-1.1" width="11.2" height="2.2" transform="rotate(60)"/><rect x="-5.6" y="-1.1" width="11.2" height="2.2" transform="rotate(-60)"/></g><circle cx="5.6" cy="5.6" r="1.9" fill="#fff"/></svg>
<div class="t " style="left:6px;top:821px;transform:scaleX(0.888);-webkit-text-stroke:0.25px currentColor;">9 列, 249 行</div>
<div class="t " style="left:78px;top:821px;transform:scaleX(0.914);-webkit-text-stroke:0.25px currentColor;">上位 1000 行に基づく列のプロファイリング</div>
<div class="t " style="left:1506px;top:821px;transform:scaleX(0.914);-webkit-text-stroke:0.25px currentColor;">9:35 にダウンロードされたプレビューです</div>
<svg style="left:0px;top:833px" width="8" height="8" viewBox="0 0 8 8"><path d="M0 0A7 7 0 0 0 7 7V8H0z" fill="#c9c9c9"/><path d="M0.5 0A6.5 6.5 0 0 0 7 6.5" stroke="#a0a0a0" stroke-width="1" fill="none"/></svg>
<svg style="left:1714px;top:833px" width="8" height="8" viewBox="0 0 8 8"><path d="M8 0A7 7 0 0 1 1 7V8H8z" fill="#c9c9c9"/><path d="M7.5 0A6.5 6.5 0 0 1 1 6.5" stroke="#a0a0a0" stroke-width="1" fill="none"/></svg>
</body></html>
